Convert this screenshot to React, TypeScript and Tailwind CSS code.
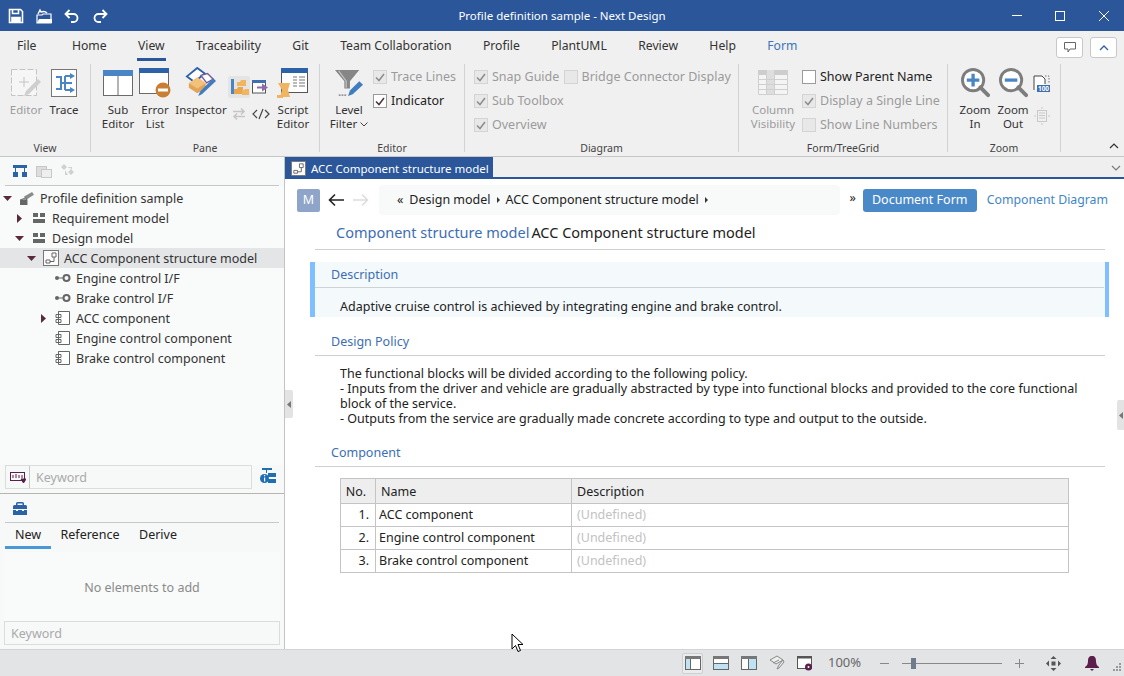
import React from "react";

const F = "[font-family:'Noto_Sans',sans-serif]";

function Save() {
  return (
    <svg width="16" height="16" viewBox="0 0 16 16" fill="none" stroke="#fff" strokeWidth="1.6">
      <path d="M1.5 1.5h11l2 2v11h-13z" />
      <path d="M4.5 1.5v4h6v-4" />
      <path d="M4 14.5v-5h8v5" fill="#fff" />
    </svg>
  );
}
function OpenIco() {
  return (
    <svg width="16" height="16" viewBox="0 0 16 16" fill="none">
      <path d="M1 15V7h5l1-1h8v9z" stroke="#fff" strokeWidth="1.2" />
      <path d="M1 15l2-4h13v4z" fill="#fff" />
      <path d="M2 6l2-4 1 2c3-1 5 0 6 1" stroke="#fff" strokeWidth="1.4" />
    </svg>
  );
}
function Undo({ flip }: { flip?: boolean }) {
  return (
    <svg width="16" height="14" viewBox="0 0 16 14" fill="none" stroke="#fff" strokeWidth="1.8" style={flip ? { transform: "scaleX(-1)" } : undefined}>
      <path d="M5.5 1L1.5 5l4 4" />
      <path d="M2 5h7.5a4 4 0 0 1 0 8H7" />
    </svg>
  );
}
function EditorIco() {
  return (
    <svg width="32" height="28" viewBox="0 0 32 28" fill="none">
      <rect x="1.5" y="0.5" width="25" height="26" fill="#f6f6f6" stroke="#c4c4c4" strokeDasharray="6 2" />
      <path d="M14 8v10M9 13h10" stroke="#c4c4c4" />
      <path d="M14 27l2-5L28 10l3 3-12 12z" fill="#cfcfcf" />
    </svg>
  );
}
function TraceIco() {
  return (
    <svg width="28" height="28" viewBox="0 0 28 28" fill="none">
      <rect x="1.5" y="0.5" width="25" height="27" fill="#fff" stroke="#777" />
      <path d="M6 8h5v12H6M11 14h4M15 7v14M15 7h6M15 21h6M15 14h7" stroke="#4a86c5" strokeWidth="2" />
      <path d="M20 4l5 3-5 3zM20 18l5 3-5 3z" fill="#4a86c5" />
    </svg>
  );
}
function SubEditorIco() {
  return (
    <svg className="mb-[1px]" width="30" height="26" viewBox="0 0 30 26" fill="none">
      <rect x="0.5" y="0.5" width="29" height="25" fill="#fff" stroke="#6a6a6a" />
      <rect x="0" y="0" width="30" height="6" fill="#4a86c5" />
      <path d="M15 6v20" stroke="#6a6a6a" />
    </svg>
  );
}
function ErrorListIco() {
  return (
    <svg className="-mb-[1px]" width="32" height="30" viewBox="0 0 32 30" fill="none">
      <rect x="0.5" y="0.5" width="29" height="25" fill="#fff" stroke="#6a6a6a" />
      <rect x="0" y="0" width="30" height="5" fill="#2b62a8" />
      <circle cx="24" cy="22" r="7.5" fill="#c87f34" />
      <rect x="19" y="20.5" width="10" height="3" fill="#fff" />
    </svg>
  );
}
function InspectorIco() {
  return (
    <svg width="34" height="30" viewBox="0 0 34 32" fill="none">
      <path d="M2 10L13 1l8 6-11 9z" fill="#fff" stroke="#2b62a8" strokeWidth="2" />
      <path d="M17 9l7-2 6 6-7 4z" fill="#fff" stroke="#7b5d9a" strokeWidth="1.5" />
      <path d="M4 17l9-6 9 6-9 7z" fill="#f3c27a" />
      <path d="M4 17v5l9 6v-5zM22 17v5l-9 6v-5z" fill="#e0a558" />
      <path d="M14 31l2-5L30 12l3 3-15 14z" fill="#3f7dc0" />
    </svg>
  );
}
function FolderTreeIco() {
  return (
    <svg width="22" height="22" viewBox="0 0 22 22">
      <rect width="22" height="22" rx="2" fill="#e4e4e4" />
      <rect x="3" y="3" width="3" height="15" fill="#4a86c5" />
      <path d="M9 6h3l1-2h5v6H9z" fill="#f0b561" />
      <path d="M6 13h3l1-2h5v7H6z" fill="#e9a64c" />
      <path d="M14 14h2l1-1h4v6h-7z" fill="#f0b561" />
    </svg>
  );
}
function WinArrowIco() {
  return (
    <svg width="18" height="14" viewBox="0 0 18 14" fill="none">
      <rect x="0.5" y="0.5" width="13" height="12.5" fill="#fff" stroke="#555" />
      <rect x="0" y="0" width="14" height="3" fill="#3f6fae" />
      <path d="M5 7.5h7" stroke="#8c6aa8" strokeWidth="2" />
      <path d="M10 3.5l6 4-6 4z" fill="#8c6aa8" />
    </svg>
  );
}
function SwapIco() {
  return (
    <svg width="14" height="14" viewBox="0 0 14 14" fill="none" stroke="#c6c6c6" strokeWidth="1.6">
      <path d="M1 4.5h11M9 1.5l3 3-3 3M13 9.5H2M5 6.5l-3 3 3 3" />
    </svg>
  );
}
function CodeIco() {
  return (
    <svg width="18" height="12" viewBox="0 0 18 12" fill="none" stroke="#444" strokeWidth="1.2">
      <path d="M5 2L1 6l4 4M13 2l4 4-4 4M11 1L7 11" />
    </svg>
  );
}
function ScriptIco() {
  return (
    <svg className="-mb-[1px]" width="32" height="30" viewBox="0 0 32 30" fill="none">
      <rect x="4.5" y="0.5" width="26" height="24" fill="#fff" stroke="#555" />
      <rect x="4" y="0" width="27" height="5" fill="#2b62a8" />
      <path d="M16 9h4M22 9h6M16 12h4M22 12h6M16 15h4M22 15h6M16 18h4M22 18h6" stroke="#777" strokeWidth="1.2" />
      <path d="M1 15h12l-2 7 2 7H3l2-7z" fill="#f0b561" />
      <path d="M0 27h6v3H0z" fill="#f0b561" />
    </svg>
  );
}
function FunnelIco() {
  return (
    <svg width="30" height="28" viewBox="0 0 32 30" fill="none">
      <path d="M1 1h26L17 13v8h-6v-8z" fill="#868686" />
      <path d="M5 2l8 11v7" stroke="#bdbdbd" strokeWidth="1.5" />
      <path d="M5 28h8" stroke="#777" strokeWidth="1.5" strokeDasharray="2 1" />
      <path d="M15 29l2-6L27 13l4 4-11 10z" fill="#3f7dc0" />
    </svg>
  );
}
function ColumnIco() {
  return (
    <svg className="mb-[2px]" width="30" height="25" viewBox="0 0 30 25" fill="none">
      <rect x="0" y="0" width="30" height="25" fill="#f4f4f4" />
      <rect x="0" y="0" width="30" height="5" fill="#cdcdcd" />
      <rect x="8" y="0" width="8" height="25" fill="#dedede" />
      <path d="M0.5 0v24.500h29V0M8.500 0v25M16.500 0v25M0 9.500h30M0 14.500h30M0 19.500h30" stroke="#cfcfcf" />
    </svg>
  );
}
function ZoomIco({ plus }: { plus?: boolean }) {
  return (
    <svg className="-mb-[1px]" width="29" height="30" viewBox="0 0 30 31" fill="none">
      <circle cx="12.5" cy="12.5" r="11" fill="#fff" stroke="#7d7d7d" strokeWidth="3" />
      <path d="M20 20l8 8" stroke="#7d7d7d" strokeWidth="4" strokeLinecap="round" />
      <path d={plus ? "M6 12.5h13M12.5 6v13" : "M6 12.5h13"} stroke="#4a86c5" strokeWidth="3.4" />
    </svg>
  );
}
function Zoom100() {
  return (
    <svg width="17" height="17" viewBox="0 0 17 17" fill="none">
      <path d="M1 15V1h8l3 3v5" stroke="#444" fill="#fff" />
      <path d="M12 1h4v7" stroke="#777" strokeDasharray="1.500 1.500" />
      <rect x="4" y="10" width="13" height="7" fill="#3f6fae" />
      <text x="10.500" y="16" fontSize="6.500" fontWeight="700" textAnchor="middle" fill="#fff">100</text>
    </svg>
  );
}
function FitIco() {
  return (
    <svg width="16" height="18" viewBox="0 0 16 18" fill="none" stroke="#c8c8c8">
      <rect x="3.5" y="3.5" width="9" height="11" />
      <path d="M5 6h6M5 8.5h6M5 11h6M8 0v2M8 16v2M0 9h2M14 9h2" />
    </svg>
  );
}
function Tri() {
  return (
    <svg width="3" height="6" viewBox="0 0 3 6" className="mx-[1px] shrink-0"><path d="M0 0l3 3-3 3z" fill="#333" /></svg>
  );
}
function Check({ on, dim }: { on: boolean; dim?: boolean }) {
  return (
    <span className={`flex h-[14px] w-[14px] shrink-0 items-center justify-center border ${dim ? "border-[#d4d4d4] bg-[#e8e8e8]" : "border-[#9a9a9a] bg-white"}`}>
      {on && (
        <svg width="10" height="9" viewBox="0 0 10 9" fill="none" stroke={dim ? "#8c8c8c" : "#4c3340"} strokeWidth="1.5">
          <path d="M1 4.5l3 3 5-6.5" />
        </svg>
      )}
    </span>
  );
}
function CheckRow({ label, on, dim }: { label: string; on: boolean; dim?: boolean }) {
  return (
    <div className={`flex h-[24px] items-center gap-[4px] whitespace-nowrap text-[12.5px] ${dim ? "text-[#9b9b9b]" : "text-[#222]"}`}>
      <Check on={on} dim={dim} />
      <span>{label}</span>
    </div>
  );
}
function Big({ icon, lines, dim, w, chev }: { icon: React.ReactNode; lines: string[]; dim?: boolean; w: number; chev?: boolean }) {
  return (
    <div className={`flex flex-col items-center ${dim ? "text-[#9b9b9b]" : "text-[#333]"}`} style={{ width: w }}>
      <div className="flex h-[32px] items-end justify-center">{icon}</div>
      <div className="mt-[6px] text-center text-[11.5px] leading-[14px] whitespace-nowrap">
        {lines.map((l, i) => (
          <div key={i} className="flex items-center justify-center gap-[3px]">
            {l}
            {chev && i === lines.length - 1 && (
              <svg width="8" height="5" viewBox="0 0 8 5" fill="none" stroke="#444"><path d="M0.5 0.5L4 4l3.5-3.5" /></svg>
            )}
          </div>
        ))}
      </div>
    </div>
  );
}
function Group({ w, label, children, last }: { w: number; label: string; children: React.ReactNode; last?: boolean }) {
  return (
    <div className={`flex h-[88px] shrink-0 flex-col ${last ? "" : "border-r border-[#d2d2d2]"}`} style={{ width: w }}>
      <div className="flex h-[77px] shrink-0">{children}</div>
      <div className="h-[11px] text-center text-[10.5px] leading-[14px] text-[#444]">{label}</div>
    </div>
  );
}
function Caret({ open }: { open?: boolean }) {
  return open ? (
    <svg width="9" height="5" viewBox="0 0 9 5"><path d="M0 0h9L4.5 5z" fill="#5a2a3a" /></svg>
  ) : (
    <svg width="5" height="9" viewBox="0 0 5 9"><path d="M0 0l5 4.5L0 9z" fill="#5a2a3a" /></svg>
  );
}
function CompIco() {
  return (
    <svg width="16" height="16" viewBox="0 0 16 16" fill="none" stroke="#666">
      <path d="M3.5 1.5h11v13h-11zM3.500 4.500v-3M1 4.500h5v3H1zM1 9.500h5v3H1z" fill="#fff" />
    </svg>
  );
}
function IfIco() {
  return (
    <svg width="16" height="8" viewBox="0 0 16 8" fill="none">
      <circle cx="2" cy="4" r="2" fill="#666" />
      <path d="M3 4h5" stroke="#666" />
      <circle cx="11.5" cy="4" r="3" stroke="#666" strokeWidth="2" />
    </svg>
  );
}
function ModelIco() {
  return (
    <svg width="12" height="10" viewBox="0 0 12 10"><path d="M0 0h5v4H0zM7 0h5v4H7zM0 6h12v4H0z" fill="#666" /></svg>
  );
}
function DiagramIco({ light, s = 16 }: { light?: boolean; s?: number }) {
  return (
    <svg width={s} height={s} viewBox="0 0 16 16" fill="none" stroke="#666">
      <rect x="0.5" y="0.5" width="15" height="15" fill={light ? "#fff" : "#fbfbfb"} stroke="#777" />
      <path d="M9 3h4v4H9zM3 10h4v3H3zM11 7v4.500H7" fill="#fff" />
    </svg>
  );
}
function ProjectIco() {
  return (
    <svg width="14" height="13" viewBox="0 0 15 14">
      <path d="M4 5L13 0l2 3-8 5z" fill="#8a8a8a" />
      <path d="M0 8l6-2 2 2v6H0z" fill="#666" />
      <path d="M1 8l5-1 1 1z" fill="#c6c6c6" />
    </svg>
  );
}
function Row({ pad, caret, icon, label, sel }: { pad: number; caret?: "o" | "c"; icon: React.ReactNode; label: string; sel?: boolean }) {
  return (
    <div className={`flex h-[20px] items-center whitespace-nowrap text-[#333] ${sel ? "bg-[#e4e5e7]" : ""}`} style={{ paddingLeft: pad }}>
      <span className="flex w-[12px] shrink-0 items-center justify-center">
        {caret === "o" ? <Caret open /> : caret === "c" ? <Caret /> : null}
      </span>
      <span className="ml-[6px] flex w-[16px] shrink-0 items-center justify-center">{icon}</span>
      <span className="ml-[5px] pt-[2px]">{label}</span>
    </div>
  );
}
function SectionTitle({ children }: { children: React.ReactNode }) {
  return <div className="pl-[16px] text-[#3c6eb4]">{children}</div>;
}
function StatusIco({ kind }: { kind: "a" | "b" | "c" }) {
  return (
    <svg width="16" height="14" viewBox="0 0 16 14" fill="none">
      <rect x="0.5" y="0.5" width="15" height="13" fill="#fff" stroke="#666" />
      <rect x="0" y="0" width="16" height="3" fill="#777" />
      {kind === "a" && <rect x="1" y="3" width="4" height="10" fill="#bfe3f2" />}
      {kind === "b" && <rect x="1" y="8" width="14" height="5" fill="#bfe3f2" />}
      {kind === "c" && <rect x="8" y="3" width="7" height="10" fill="#bfe3f2" />}
      {kind === "a" && <path d="M5.5 3v10" stroke="#666" />}
      {kind === "b" && <path d="M1 7.5h14" stroke="#666" />}
      {kind === "c" && <path d="M7.5 3v10" stroke="#666" />}
    </svg>
  );
}

export default function App() {
  const tabs = ["File", "Home", "View", "Traceability", "Git", "Team Collaboration", "Profile", "PlantUML", "Review", "Help", "Form"];
  return (
    <div className={`flex h-[676px] w-[1124px] flex-col overflow-hidden bg-white text-[13px] ${F}`}>
      {/* Title bar */}
      <div className="flex h-[31px] shrink-0 items-center bg-[#2b579a] text-[11.5px] text-white">
        <div className="flex w-[230px] items-center gap-[12px] pl-[8px]">
          <Save /><OpenIco /><Undo /><Undo flip />
        </div>
        <div className="flex-1 text-center">Profile definition sample - Next Design</div>
        <div className="flex w-[230px] items-center justify-end pr-[15px]">
          <span className="h-px w-[10px] bg-white" />
          <span className="ml-[33px] h-[10px] w-[10px] border border-white" />
          <svg className="ml-[34px]" width="10" height="10" viewBox="0 0 10 10" stroke="#fff"><path d="M0 0l10 10M10 0L0 10" /></svg>
        </div>
      </div>
      {/* Tabs */}
      <div className="flex h-[33px] shrink-0 items-start bg-[#f0f0f0] pt-[6px] text-[#333]">
        <div className="flex-1">
          <div className="flex gap-[31.4px] whitespace-nowrap pl-[17px] text-[12.2px]">
            {tabs.map((t) => (
              <div key={t} className={`h-[24px] ${t === "View" ? "-mx-px border-b-[3px] border-[#2b579a] px-px" : ""} ${t === "Form" ? "text-[#3b74ba]" : ""} ${t === "File" ? "mr-[4px]" : ""}`}>
                {t}
              </div>
            ))}
          </div>
        </div>
        <div className="flex gap-[7px] pr-[7px]">
          <div className="flex h-[21px] w-[27px] items-center justify-center rounded-[3px] border border-[#c8c8c8] bg-white">
            <svg width="14" height="13" viewBox="0 0 14 13" fill="none" stroke="#666"><path d="M1.5 1.5h11v6.5H7l-2 3V8H1.5z" /></svg>
          </div>
          <div className="flex h-[21px] w-[27px] items-center justify-center rounded-[3px] border border-[#c8c8c8] bg-white">
            <svg width="10" height="6" viewBox="0 0 10 6" fill="none" stroke="#2b62a8" strokeWidth="1.3"><path d="M1 5l4-4 4 4" /></svg>
          </div>
        </div>
      </div>
      {/* Ribbon */}
      <div className="relative flex h-[93px] shrink-0 border-b border-[#c6c6c6] bg-[#f0f0f0] text-[12px]">
        <Group w={91} label="View">
          <div className="flex pl-[9px] pt-[1px]">
            <Big icon={<EditorIco />} lines={["Editor"]} dim w={34} />
            <div className="w-[4px]" />
            <Big icon={<TraceIco />} lines={["Trace"]} w={34} />
          </div>
        </Group>
        <Group w={229} label="Pane">
          <div className="flex pl-[11px] pt-[1px]">
            <Big icon={<SubEditorIco />} lines={["Sub", "Editor"]} w={32} />
            <div className="w-[5px]" />
            <Big icon={<ErrorListIco />} lines={["Error", "List"]} w={32} />
            <div className="w-[4px]" />
            <Big icon={<InspectorIco />} lines={["Inspector"]} w={52} />
            <div className="ml-[1px] mt-[8px] grid h-[54px] w-[44px] grid-cols-2 grid-rows-2 items-center justify-items-center">
              <FolderTreeIco /><WinArrowIco /><SwapIco /><CodeIco />
            </div>
            <div className="w-[4px]" />
            <Big icon={<ScriptIco />} lines={["Script", "Editor"]} w={34} />
          </div>
        </Group>
        <Group w={145} label="Editor">
          <div className="flex pl-[11px] pt-[1px]">
            <Big icon={<FunnelIco />} lines={["Level", "Filter"]} w={36} chev />
            <div className="ml-[6px]">
              <CheckRow label="Trace Lines" on dim />
              <CheckRow label="Indicator" on />
            </div>
          </div>
        </Group>
        <Group w={274} label="Diagram">
          <div className="flex pl-[9px] pt-[1px]">
            <div>
              <CheckRow label="Snap Guide" on dim />
              <CheckRow label="Sub Toolbox" on dim />
              <CheckRow label="Overview" on dim />
            </div>
            <div>
              <CheckRow label="Bridge Connector Display" on={false} dim />
            </div>
          </div>
        </Group>
        <Group w={209} label="Form/TreeGrid">
          <div className="flex pl-[11px] pt-[1px]">
            <Big icon={<ColumnIco />} lines={["Column", "Visibility"]} dim w={46} />
            <div className="ml-[6px]">
              <CheckRow label="Show Parent Name" on={false} />
              <CheckRow label="Display a Single Line" on dim />
              <CheckRow label="Show Line Numbers" on={false} dim />
            </div>
          </div>
        </Group>
        <Group w={113} label="Zoom">
          <div className="flex pl-[12px] pt-[1px]">
            <Big icon={<ZoomIco plus />} lines={["Zoom", "In"]} w={30} />
            <div className="w-[8px]" />
            <Big icon={<ZoomIco />} lines={["Zoom", "Out"]} w={30} />
            <div className="ml-[5px] mt-[10px] flex h-[50px] flex-col items-center justify-between">
              <Zoom100 /><FitIco />
            </div>
          </div>
        </Group>
        <svg className="absolute bottom-[7px] right-[5px]" width="10" height="6" viewBox="0 0 10 6" fill="none" stroke="#333" strokeWidth="1.2"><path d="M1 5l4-4 4 4" /></svg>
      </div>
      {/* Main */}
      <div className="relative flex min-h-0 flex-1">
        {/* Left */}
        <div className="flex w-[285px] shrink-0 flex-col border-r border-[#c4c4c4] bg-[#f7f8f8] text-[12.5px]">
          <div className="mx-[5px] flex h-[29px] shrink-0 items-center gap-[9px] border-b border-[#c8c8c8] pl-[8px]">
            <svg width="14" height="12" viewBox="0 0 14 12"><path d="M0 0h14v3H0zM2 3h1v4H2zM11 3h1v4h-1zM0 7h5v5H0zM9 7h5v5H9z" fill="#2b62a8" /></svg>
            <svg width="16" height="14" viewBox="0 0 16 14" fill="none" stroke="#c8c8c8"><rect x="0.5" y="2.5" width="10" height="10" fill="#ddd" /><rect x="5.5" y="5.5" width="10" height="8" fill="#eee" /></svg>
            <svg width="14" height="14" viewBox="0 0 14 14"><path d="M3 0l3 3-3 3-3-3zM10 5l3 3-3 3-3-3zM6 3h5v2M4 6v5h3" fill="#d0d0d0" /></svg>
          </div>
          <div className="h-[279px] shrink-0 bg-[#f9fafa] pt-[2px]">
            <Row pad={1} caret="o" icon={<ProjectIco />} label="Profile definition sample" />
            <Row pad={13} caret="c" icon={<ModelIco />} label="Requirement model" />
            <Row pad={13} caret="o" icon={<ModelIco />} label="Design model" />
            <Row pad={25} caret="o" icon={<DiagramIco />} label="ACC Component structure model" sel />
            <Row pad={37} icon={<IfIco />} label="Engine control I/F" />
            <Row pad={37} icon={<IfIco />} label="Brake control I/F" />
            <Row pad={37} caret="c" icon={<CompIco />} label="ACC component" />
            <Row pad={37} icon={<CompIco />} label="Engine control component" />
            <Row pad={37} icon={<CompIco />} label="Brake control component" />
          </div>
          <div className="flex h-[29px] shrink-0 items-start border-b border-[#b9b4b0] pl-[5px]">
            <div className="flex h-[24px] w-[247px] items-center border border-[#dcdcdc]">
              <div className="flex h-full w-[24px] items-center justify-center border-r border-[#c8c8c8]">
                <svg width="16" height="11" viewBox="0 0 16 11" fill="none" stroke="#5a1f4a"><rect x="0.5" y="0.5" width="14" height="8" /><path d="M3 3v3M6 2v4M9 3v3M12 3v3" /><path d="M11 7h5l-2.500 4z" fill="#5a1f4a" /></svg>
              </div>
              <span className="pl-[6px] pt-[2px] text-[#aaa]">Keyword</span>
            </div>
            <svg className="ml-[8px] mt-[3px]" width="16" height="16" viewBox="0 0 16 16"><path d="M2 0h10v2H2zM6 2h1v3H6zM8 5h8v4H8zM8 11h8v4H8z" fill="#1f6fb5" /><circle cx="4.500" cy="10.500" r="4.500" fill="#1f6fb5" /><path d="M4 7h1.200v1.300H4zM4 9.500h1.200v4H4z" fill="#fff" /></svg>
          </div>
          <div className="mx-[5px] flex h-[29px] shrink-0 items-center border-b border-[#c8c8c8] pl-[8px]">
            <svg width="14" height="13" viewBox="0 0 14 13"><path d="M3 3V1.500A1.500 1.500 0 0 1 4.500 0h5A1.500 1.500 0 0 1 11 1.500V3h1.500A1.500 1.500 0 0 1 14 4.500V7H0V4.500A1.500 1.500 0 0 1 1.500 3zM4.500 1.500V3h5V1.500zM0 8h3v1h2V8h4v1h2V8h3v5H0z" fill="#2b62a8" /></svg>
          </div>
          <div className="mx-[5px] flex h-[26px] shrink-0 gap-[9px] pt-[3px]">
            <div className="h-full w-[46px] border-b-[3px] border-[#4a98d8] text-center text-[#222]">New</div>
            <div className="w-[60px] text-center text-[#222]">Reference</div>
            <div className="ml-[9px] w-[40px] text-center text-[#222]">Derive</div>
          </div>
          <div className="mx-[4px] mt-[3px] flex flex-1 flex-col">
            <div className="flex flex-1 items-center justify-center bg-[#f9fafa] pt-[4px] text-[#8a8a8a]">No elements to add</div>
            <div className="mb-[4px] flex h-[24px] w-[276px] shrink-0 items-center border border-[#dcdcdc] pl-[6px] pt-[2px] text-[#aaa]">Keyword</div>
          </div>
        </div>
        {/* Right */}
        <div className="flex min-w-0 flex-1 flex-col text-[12.5px] text-[#222]">
          <div className="flex h-[22px] shrink-0 items-start justify-between border-b-[2px] border-[#2b579a] bg-[#efefef]">
            <div className="flex h-[20px] w-[208px] items-center gap-[5px] bg-[#2b579a] pl-[6px] pt-[3px] text-[11.5px] text-white">
              <DiagramIco light s={15} />
              <span className="whitespace-nowrap">ACC Component structure model</span>
            </div>
            <svg className="mr-[3px] mt-[8px]" width="10" height="6" viewBox="0 0 10 6" fill="none" stroke="#777" strokeWidth="1.1"><path d="M1 1l4 4 4-4" /></svg>
          </div>
          <div className="flex h-[42px] shrink-0 items-center pl-[12px] pr-[16px]">
            <div className="flex h-[23px] w-[23px] items-center justify-center rounded-[2px] bg-[#8ea4c8] pt-[1px] text-white">M</div>
            <svg className="ml-[8px]" width="16" height="14" viewBox="0 0 16 14" fill="none" stroke="#222" strokeWidth="1.6"><path d="M16 7H2M7 1.500L1.500 7 7 12.500" /></svg>
            <svg className="ml-[9px]" width="16" height="14" viewBox="0 0 16 14" fill="none" stroke="#ddd" strokeWidth="1.6"><path d="M0 7h14M9 1.500L14.500 7 9 12.500" /></svg>
            <div className="ml-[10px] flex h-[30px] w-[462px] items-center gap-[5px] whitespace-nowrap rounded-[4px] bg-[#f8f9f9] pl-[18px]">
              <span className="mr-[1px]">«</span><span>Design model</span><Tri /><span>ACC Component structure model</span><Tri />
            </div>
            <span className="ml-[9px] mt-[-4px]">»</span>
            <div className="ml-[7px] flex h-[23px] w-[114px] items-center justify-center rounded-[3px] bg-[#4a89c8] pt-[1px] text-white">Document Form</div>
            <div className="ml-[10px] whitespace-nowrap text-[12.3px] text-[#3f86c8]">Component Diagram</div>
          </div>
          <div className="ml-[30px] mr-[19px] flex h-[29px] shrink-0 items-center gap-[2px] whitespace-nowrap border-b border-[#cfcfcf] pb-[4px] pl-[21px] text-[14.5px]">
            <span className="text-[#3c6eb4]">Component structure model</span>
            <span>ACC Component structure model</span>
          </div>
          <div className="ml-[25px] mr-[15px] mt-[12px] h-[55px] shrink-0 border-l-[5px] border-r-[4px] border-x-[#80bfff] bg-[#f4f9fc]">
            <div className="mr-[1px] flex h-[26px] items-center border-b border-[#cfd3d6] pl-[16px] pt-[1px] text-[#3c6eb4]">Description</div>
            <div className="h-[29px] pl-[25px] pt-[10px]">Adaptive cruise control is achieved by integrating engine and brake control.</div>
          </div>
          <div className="ml-[30px] mr-[19px] mt-[15px] flex h-[24px] shrink-0 items-center border-b border-[#cfcfcf] pb-[3px]">
            <SectionTitle>Design Policy</SectionTitle>
          </div>
          <div className="ml-[55px] mr-[20px] mt-[10px] shrink-0 leading-[15px]">
            <div>The functional blocks will be divided according to the following policy.</div>
            <div>- Inputs from the driver and vehicle are gradually abstracted by type into functional blocks and provided to the core functional block of the service.</div>
            <div>- Outputs from the service are gradually made concrete according to type and output to the outside.</div>
          </div>
          <div className="ml-[30px] mr-[19px] mt-[17px] flex h-[24px] shrink-0 items-center border-b border-[#cfcfcf] pb-[3px]">
            <SectionTitle>Component</SectionTitle>
          </div>
          <table className="ml-[55px] mt-[11px] w-[729px] shrink-0 table-fixed border-collapse border border-[#c4c4c4]">
            <thead>
              <tr className="h-[25px] bg-[#eeeeee] font-normal">
                <th className="w-[35px] border border-[#c4c4c4] pr-[4px] pt-[2px] text-center font-normal">No.</th>
                <th className="w-[196px] border border-[#c4c4c4] pl-[5px] pt-[2px] text-left font-normal">Name</th>
                <th className="border border-[#c4c4c4] pl-[5px] pt-[2px] text-left font-normal">Description</th>
              </tr>
            </thead>
            <tbody>
              {["ACC component", "Engine control component", "Brake control component"].map((n, i) => (
                <tr key={n} className="h-[23px]">
                  <td className="border border-[#c4c4c4] pr-[6px] text-right">{i + 1}.</td>
                  <td className="border border-[#c4c4c4] pl-[3px]">{n}</td>
                  <td className="border border-[#c4c4c4] pl-[5px] text-[#c2c2c2]">(Undefined)</td>
                </tr>
              ))}
            </tbody>
          </table>
        </div>
        {/* splitter grips */}
        <div className="absolute left-[285px] top-[233px] flex h-[28px] w-[8px] items-center justify-center rounded-r-[2px] bg-[#e3e3e3]">
          <svg width="4" height="7" viewBox="0 0 4 7"><path d="M4 0L0 3.500 4 7z" fill="#777" /></svg>
        </div>
        <div className="absolute right-0 top-[243px] flex h-[30px] w-[7px] items-center justify-center rounded-l-[2px] bg-[#e3e3e3]">
          <svg width="4" height="7" viewBox="0 0 4 7"><path d="M4 0L0 3.500 4 7z" fill="#777" /></svg>
        </div>
        <svg className="absolute left-[511px] top-[476px]" width="14" height="20" viewBox="0 0 14 20">
          <path d="M1 1v15l3.500-3.500 2.500 6 2.500-1-2.500-6h5z" fill="#fff" stroke="#000" />
        </svg>
      </div>
      {/* Status */}
      <div className="flex h-[27px] shrink-0 items-center border-t border-[#d4d4d4] bg-[#e3e4e6] pl-[682px] text-[#666]">
        <div className="flex h-[21px] w-[21px] items-center justify-center rounded-[2px] border border-[#cfcfcf] bg-[#ececec]"><StatusIco kind="a" /></div>
        <div className="ml-[10px]"><StatusIco kind="b" /></div>
        <div className="ml-[12px]"><StatusIco kind="c" /></div>
        <svg className="ml-[12px]" width="16" height="16" viewBox="0 0 16 16" fill="none" stroke="#888"><path d="M1 5l7-4 6 4-7 4zM4 8l6-3M8 14l2-4 4-5 1 2-5 6z" fill="#eee" /></svg>
        <svg className="ml-[12px]" width="16" height="15" viewBox="0 0 16 15" fill="none"><rect x="0.5" y="0.500" width="14" height="12" fill="#fff" stroke="#555" /><rect x="0" y="0" width="15" height="2.500" fill="#555" /><circle cx="11.500" cy="11" r="3.500" fill="#5a1f4a" /><circle cx="11.500" cy="11" r="1" fill="#fff" /></svg>
        <span className="ml-[15px] w-[35px] whitespace-nowrap text-[13px]">100%</span>
        <span className="ml-[17px] h-px w-[9px] bg-[#888]" />
        <div className="relative ml-[13px] flex h-[12px] w-[100px] items-center">
          <div className="h-px w-full bg-[#888]" />
          <div className="absolute left-[9px] h-[11px] w-[5px] bg-[#6e7c8c]" />
        </div>
        <svg className="ml-[13px]" width="9" height="9" viewBox="0 0 9 9" stroke="#888"><path d="M0 4.500h9M4.500 0v9" /></svg>
        <svg className="ml-[22px]" width="15" height="15" viewBox="0 0 15 15"><path d="M7.500 0l3 3h-6zM7.500 15l3-3h-6zM0 7.500l3-3v6zM15 7.500l-3-3v6z" fill="#555" /><rect x="5.500" y="5.500" width="4" height="4" fill="#555" /></svg>
        <svg className="ml-[24px]" width="14" height="15" viewBox="0 0 14 15"><path d="M7 0c3 0 4 2 4 5s1 5 3 6v1H0v-1c2-1 3-3 3-6s1-5 4-5zM5 13h4l-2 2z" fill="#5a1f4a" /></svg>
        <svg className="ml-[14px] mt-[8px]" width="8" height="8" viewBox="0 0 8 8" fill="#999"><path d="M6 0h2v2H6zM3 3h2v2H3zM6 3h2v2H6zM0 6h2v2H0zM3 6h2v2H3zM6 6h2v2H6z" /></svg>
      </div>
    </div>
  );
}
